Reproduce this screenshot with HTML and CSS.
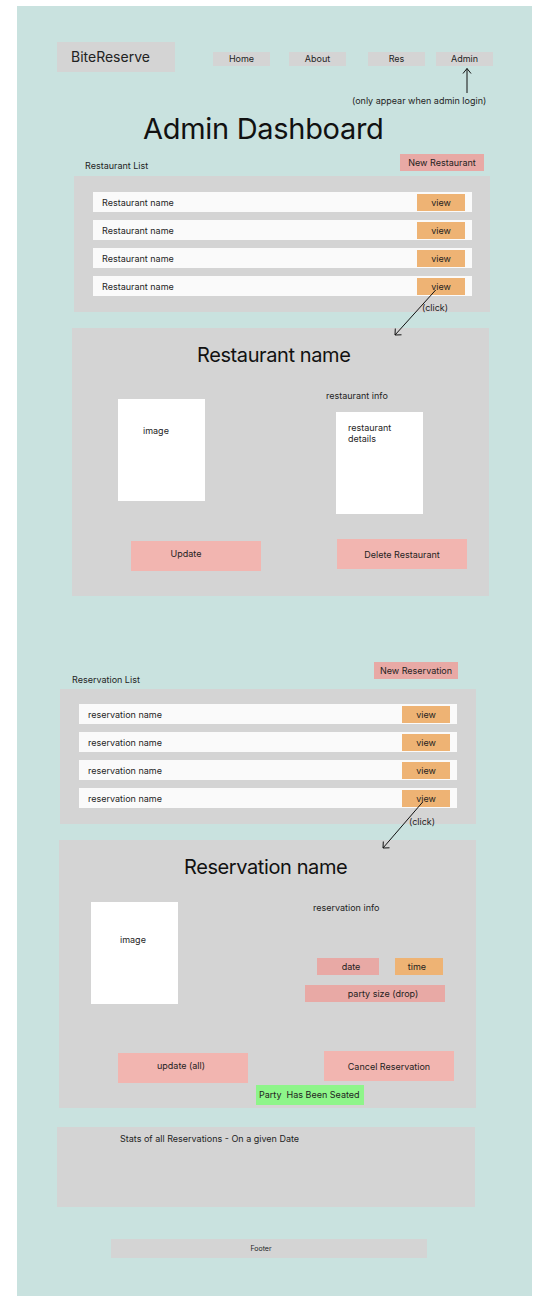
FILE: index.html
```
<!DOCTYPE html>
<html lang="en">
<head>
  <meta charset="UTF-8" />
  <meta name="viewport" content="width=device-width, initial-scale=1.0"/>
  <title>BiteReserve - Admin Dashboard</title>
  <link rel="stylesheet" href="styles.css">
</head>
<body>

<div class="frame">

  <!-- 상단 바 -->
  <header class="topbar">
    <div class="logo">BiteReserve</div>
    <nav class="nav">
      <a class="nav-item">Home</a>
      <a class="nav-item about">About</a>
      <a class="nav-item res">Res</a>
      <a class="nav-item admin">Admin</a>
    </nav>
  </header>
  <div class="admin-note">(only appear when admin login)</div>

  <h1 class="page-title">Admin Dashboard</h1>

  <!-- 레스토랑 목록 -->
  <div class="list-head restaurant-head">
    <span class="list-label">Restaurant List</span>
    <button class="new-button">New Restaurant</button>
  </div>

  <section class="panel list-panel restaurant-list">
    <div class="list-row"><span>Restaurant name</span><button class="view-button">view</button></div>
    <div class="list-row"><span>Restaurant name</span><button class="view-button">view</button></div>
    <div class="list-row"><span>Restaurant name</span><button class="view-button">view</button></div>
    <div class="list-row"><span>Restaurant name</span><button class="view-button">view</button></div>
  </section>

  <!-- 레스토랑 상세 -->
  <section class="panel detail-panel restaurant-detail">
    <h2 class="detail-title">Restaurant name</h2>
    <div class="detail-body">
      <div class="image-box">image</div>
      <div class="info-col">
        <div class="info-label">restaurant info</div>
        <div class="details-box">restaurant<br>details</div>
      </div>
    </div>
    <div class="detail-actions">
      <button class="action-button update-button">Update</button>
      <button class="action-button delete-button">Delete Restaurant</button>
    </div>
  </section>

  <!-- 예약 목록 -->
  <div class="list-head reservation-head">
    <span class="list-label">Reservation List</span>
    <button class="new-button">New Reservation</button>
  </div>

  <section class="panel list-panel reservation-list">
    <div class="list-row"><span>reservation name</span><button class="view-button">view</button></div>
    <div class="list-row"><span>reservation name</span><button class="view-button">view</button></div>
    <div class="list-row"><span>reservation name</span><button class="view-button">view</button></div>
    <div class="list-row"><span>reservation name</span><button class="view-button">view</button></div>
  </section>

  <!-- 예약 상세 -->
  <section class="panel detail-panel reservation-detail">
    <h2 class="detail-title">Reservation name</h2>
    <div class="detail-body">
      <div class="image-box">image</div>
      <div class="info-col">
        <div class="info-label">reservation info</div>
        <div class="field-row">
          <button class="field date-field">date</button>
          <button class="field time-field">time</button>
        </div>
        <button class="field party-field">party size (drop)</button>
      </div>
    </div>
    <div class="detail-actions">
      <button class="action-button update-all-button">update (all)</button>
      <button class="action-button cancel-button">Cancel Reservation</button>
    </div>
    <button class="seated-button">Party&nbsp; Has Been Seated</button>
  </section>

  <!-- 통계 -->
  <section class="panel stats-panel">Stats of all Reservations - On a given Date</section>

  <footer class="footer">Footer</footer>

  <!-- 주석 화살표 -->
  <svg class="annotations" width="515" height="1291" viewBox="0 0 515 1291">
    <g stroke="#111" stroke-width="1" fill="none">
      <line x1="450" y1="62.5" x2="450" y2="87"/>
      <polyline points="446,67.5 450,62.5 454,67.5"/>
      <line x1="418.7" y1="284" x2="378" y2="329"/>
      <polyline points="378.3,322.5 378,329 384.5,328.8"/>
      <line x1="405.7" y1="796" x2="366" y2="842"/>
      <polyline points="366.3,835.5 366,842 372.5,841.8"/>
    </g>
  </svg>
  <span class="click-note click-a">(click)</span>
  <span class="click-note click-b">(click)</span>

</div>

</body>
</html>
```

FILE: styles.css
```
body {
  margin: 0;
  background-color: #ffffff;
  font-family: Inter, 'Liberation Sans', sans-serif;
  color: #1e1e1e;
}

button {
  font-family: inherit;
  color: inherit;
  border: none;
  padding: 0;
  margin: 0;
  cursor: pointer;
}

.frame {
  position: relative;
  width: 515px;
  margin: 6px 0 0 17px;
  padding-bottom: 38px;
  background-color: #c9e2df;
  font-size: 9px;
  line-height: 11px;
}

/* 상단 바 */
.topbar {
  display: flex;
  align-items: flex-start;
  padding: 36px 0 0 40px;
}

.logo {
  width: 118px;
  height: 30px;
  box-sizing: border-box;
  padding-left: 14px;
  background-color: #d4d4d4;
  font-size: 14px;
  line-height: 30px;
  color: #222;
}

.nav {
  display: flex;
  margin: 10px 0 0 38px;
}

.nav-item {
  width: 57px;
  height: 14px;
  background-color: #d4d4d4;
  text-align: center;
  line-height: 14px;
}

.nav .about { margin-left: 19px; }
.nav .res { margin-left: 22px; }
.nav .admin { margin-left: 11px; }

.admin-note {
  margin-top: 23px;
  padding-left: 335px;
}

.page-title {
  margin: 6px 0 0 126px;
  font-size: 29px;
  line-height: 34px;
  font-weight: 400;
  letter-spacing: -0.3px;
  color: #111;
}

/* 목록 */
.list-head {
  display: flex;
  justify-content: space-between;
}

.restaurant-head {
  align-items: flex-end;
  margin-top: 8px;
  padding: 0 48px 0 68px;
}

.reservation-head {
  align-items: flex-start;
  margin-top: 66px;
  padding: 0 74px 0 55px;
}

.reservation-head .list-label {
  margin-top: 12px;
}

.new-button {
  width: 84px;
  height: 17px;
  background-color: #e8a9a5;
  font-size: 9px;
  line-height: 17px;
}

.panel {
  background-color: #d4d4d4;
  box-sizing: border-box;
}

.list-panel {
  display: flex;
  flex-direction: column;
  gap: 8px;
  width: 416px;
}

.restaurant-list {
  margin: 5px 0 0 57px;
  padding: 16px 18px 16px 19px;
}

.reservation-list {
  margin: 4px 0 0 43px;
  padding: 15px 19px 16px 19px;
}

.list-row {
  display: flex;
  align-items: center;
  justify-content: space-between;
  height: 20px;
  padding: 0 7px 0 9px;
  background-color: #fafafa;
}

.view-button {
  width: 48px;
  height: 17px;
  background-color: #eeb374;
  font-size: 9px;
  line-height: 17px;
}

/* 상세 패널 */
.detail-panel {
  width: 417px;
  margin-top: 16px;
  padding: 15px 0 25px 0;
}

.restaurant-detail { margin-left: 55px; }
.reservation-detail { margin-left: 42px; padding-bottom: 3px; }

.detail-title {
  margin: 0 0 0 125px;
  font-size: 20px;
  line-height: 24px;
  font-weight: 400;
  letter-spacing: -0.4px;
  color: #111;
}

.detail-body {
  display: flex;
  align-items: flex-start;
  margin-top: 23px;
}

.image-box {
  width: 87px;
  height: 102px;
  box-sizing: border-box;
  background-color: #ffffff;
}

.restaurant-detail .image-box {
  margin: 9px 0 0 46px;
  padding: 26px 0 0 25px;
}

.reservation-detail .image-box {
  margin-left: 32px;
  padding: 32px 0 0 29px;
}

.restaurant-detail .info-col { margin-left: 121px; }
.reservation-detail .info-col { margin-left: 127px; }

.reservation-detail .info-label { margin-left: 8px; }

.details-box {
  width: 87px;
  height: 102px;
  box-sizing: border-box;
  margin: 11px 0 0 10px;
  padding: 10px 0 0 12px;
  background-color: #ffffff;
}

.field-row {
  display: flex;
  margin: 45px 0 0 12px;
}

.field {
  height: 17px;
  font-size: 9px;
  line-height: 17px;
  background-color: #e8a9a5;
}

.date-field { width: 62px; padding-left: 6px; }
.time-field { width: 48px; margin-left: 16px; padding-right: 4px; background-color: #eeb374; }
.party-field { display: block; width: 140px; margin-top: 10px; padding-left: 16px; }

.detail-actions {
  display: flex;
  align-items: flex-start;
  padding-left: 59px;
}

.restaurant-detail .detail-actions { margin-top: 25px; }
.reservation-detail .detail-actions { margin-top: 47px; }

.action-button {
  display: flex;
  align-items: center;
  justify-content: center;
  width: 130px;
  height: 30px;
  box-sizing: border-box;
  background-color: #f2b5b0;
  font-size: 9px;
}

.update-button { margin-top: 2px; padding: 0 20px 6px 0; }
.delete-button { margin-left: 76px; }
.update-all-button { margin-top: 2px; padding: 0 4px 6px 0; }
.cancel-button { margin-left: 76px; }

.seated-button {
  display: block;
  width: 108px;
  height: 20px;
  margin: 2px 0 0 197px;
  padding-left: 3px;
  text-align: left;
  background-color: #8ef58a;
  font-size: 9px;
  line-height: 20px;
}

/* 통계, 푸터 */
.stats-panel {
  width: 418px;
  height: 80px;
  margin: 19px 0 0 40px;
  padding: 6px 0 0 63px;
}

.footer {
  width: 316px;
  height: 19px;
  margin: 32px 0 0 94px;
  padding-right: 16px;
  box-sizing: border-box;
  background-color: #d4d4d4;
  text-align: center;
  font-size: 7px;
  line-height: 19px;
}

/* 주석 */
.annotations {
  position: absolute;
  top: 0;
  left: 0;
  pointer-events: none;
}

.click-note {
  position: absolute;
}

.click-a { left: 405px; top: 296px; }
.click-b { left: 392px; top: 810px; }
```
